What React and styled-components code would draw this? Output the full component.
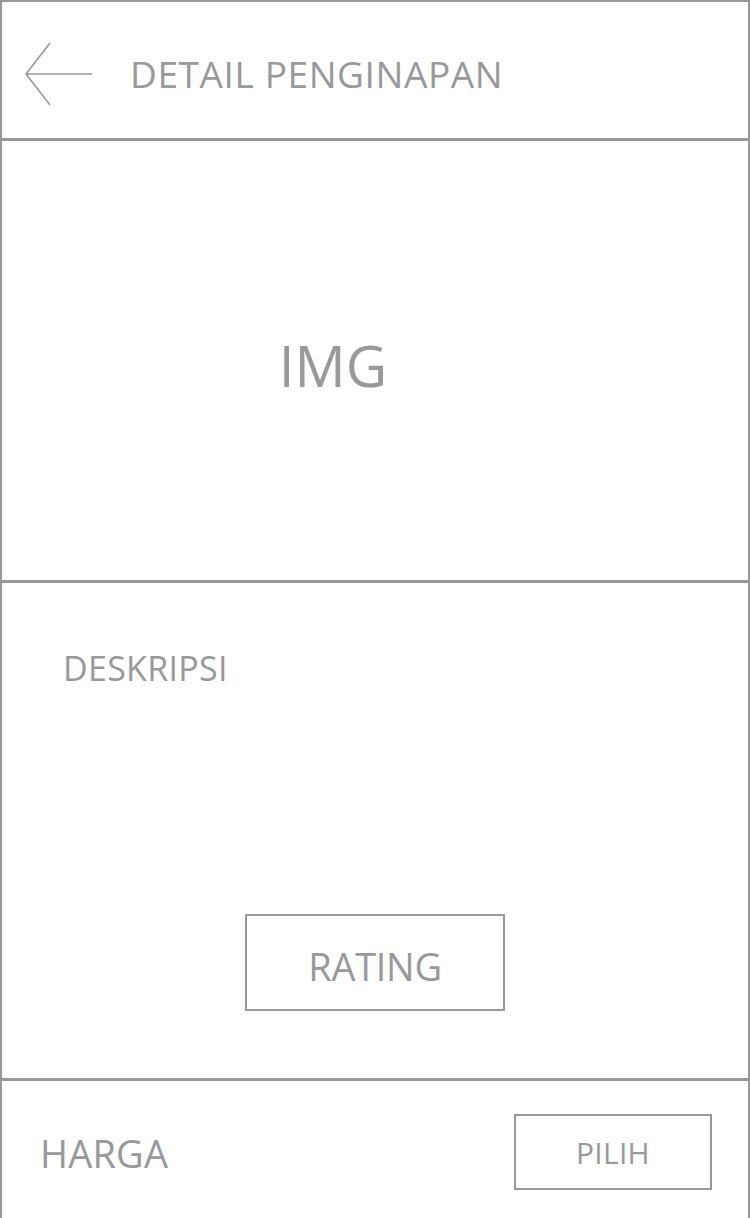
import React from "react";
import styled, { createGlobalStyle } from "styled-components";

const ink = "#97999b";

const GlobalStyle = createGlobalStyle`
  html, body {
    margin: 0;
    padding: 0;
    background: #fff;
  }
  body {
    font-family: "Open Sans", "Liberation Sans", sans-serif;
    color: ${ink};
  }
  * {
    box-sizing: border-box;
  }
`;

const Frame = styled.div`
  width: 750px;
  height: 1218px;
  border: 2px solid ${ink};
  border-bottom: none;
  display: flex;
  flex-direction: column;
  overflow: hidden;
`;

const Header = styled.header`
  height: 139px;
  border-bottom: 3px solid ${ink};
  display: flex;
  align-items: center;
  padding-left: 22px;
  padding-top: 6px;
`;

const BackButton = styled.button`
  border: none;
  background: none;
  padding: 0;
  margin-top: 2px;
  width: 68px;
  height: 64px;
  display: flex;
  cursor: pointer;
`;

const Title = styled.h1`
  margin: 0 0 0 38px;
  font-size: 37px;
  font-weight: 400;
  line-height: 1;
  letter-spacing: 0.6px;
`;

const ImageArea = styled.section`
  height: 442px;
  border-bottom: 3px solid ${ink};
  display: flex;
  align-items: center;
  justify-content: center;
  padding: 10px 84px 0 0;
`;

const Placeholder = styled.span`
  font-size: 57px;
  line-height: 1;
`;

const Description = styled.section`
  height: 498px;
  border-bottom: 3px solid ${ink};
  display: flex;
  flex-direction: column;
  padding: 68px 61px 67px;
`;

const Label = styled.p`
  margin: 0;
  font-size: ${(p) => p.$size || 32}px;
  line-height: 1;
  letter-spacing: ${(p) => p.$spacing || 0}px;
`;

const OutlineBox = styled.div`
  width: ${(p) => p.$w}px;
  height: ${(p) => p.$h}px;
  border: 2px solid ${ink};
  display: flex;
  align-items: center;
  justify-content: center;
  padding-top: ${(p) => p.$nudge || 0}px;
`;

const RatingBox = styled(OutlineBox)`
  margin-top: auto;
  align-self: center;
`;

const Footer = styled.footer`
  flex: 1;
  display: flex;
  align-items: flex-start;
  justify-content: space-between;
  padding: 33px 36px 0 38px;
`;

const Price = styled(Label)`
  margin-top: 20px;
`;

export default function App() {
  return (
    <>
      <GlobalStyle />
      <Frame>
        <Header>
          <BackButton aria-label="Kembali">
            <svg width="68" height="64" viewBox="0 0 68 64" fill="none">
              <path
                d="M26 1 L2 32 L26 63 M2 32 H68"
                stroke={ink}
                strokeWidth="1.6"
              />
            </svg>
          </BackButton>
          <Title>DETAIL PENGINAPAN</Title>
        </Header>
        <ImageArea>
          <Placeholder>IMG</Placeholder>
        </ImageArea>
        <Description>
          <Label $size={34} $spacing={0.3}>DESKRIPSI</Label>
          <RatingBox $w={260} $h={97} $nudge={6}>
            <Label $size={38} $spacing={-0.3}>RATING</Label>
          </RatingBox>
        </Description>
        <Footer>
          <Price $size={38} $spacing={0.2}>HARGA</Price>
          <OutlineBox $w={198} $h={76} $nudge={2}>
            <Label $size={30} $spacing={0.3}>PILIH</Label>
          </OutlineBox>
        </Footer>
      </Frame>
    </>
  );
}
